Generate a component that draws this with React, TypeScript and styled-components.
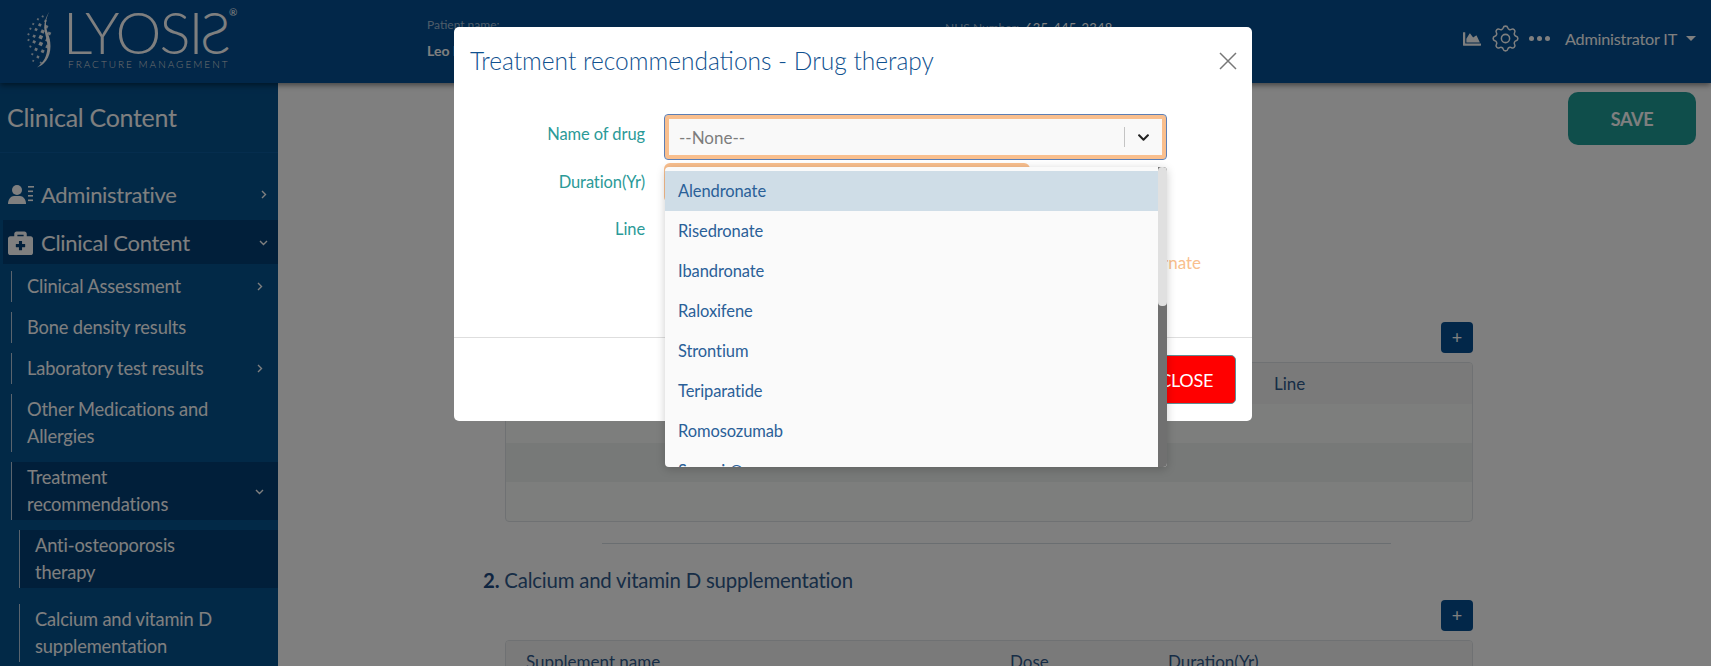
import React from "react";
import styled, { createGlobalStyle } from "styled-components";
import { FaBriefcaseMedical, FaChartArea, FaChevronDown } from "react-icons/fa";
import { HiOutlineCog } from "react-icons/hi";

const Global = createGlobalStyle`
  html, body { margin: 0; padding: 0; height: 100%; overflow: hidden; background: #fff; }
  body { font-family: Lato, "Liberation Sans", sans-serif; }
  * { box-sizing: border-box; }
`;

const Page = styled.div`
  position: relative;
  width: 1711px;
  height: 666px;
  overflow: hidden;
  display: flex;
  flex-direction: column;
`;
const Header = styled.header`
  flex: 0 0 83px;
  height: 83px;
  background: #044f92;
  display: flex;
  align-items: flex-start;
  box-shadow: 0 2px 6px rgba(0, 0, 0, 0.5);
  position: relative;
  z-index: 2;
`;
const LogoBlock = styled.div`
  width: 427px;
  flex: none;
  display: flex;
  align-items: flex-start;
  padding: 9px 0 0 20px;
  color: #fff;
`;
const LogoText = styled.div`
  margin-left: 9px;
  position: relative;
  display: flex;
  flex-direction: column;
`;
const LogoWord = styled.div`
  font-size: 58px;
  font-weight: 300;
  line-height: 58px;
  margin: -6px 0 -6px;
  letter-spacing: -2px;
  white-space: nowrap;
  display: flex;
`;
const Mirrored = styled.span`
  display: inline-block;
  transform: scaleX(-1);
`;
const LogoSub = styled.div`
  font-size: 10px;
  font-weight: 300;
  letter-spacing: 2px;
  line-height: 11px;
  margin: 4px 0 0 5px;
  white-space: nowrap;
  color: #ddd;
`;
const Reg = styled.span`
  position: absolute;
  left: 166px;
  top: -3px;
  font-size: 10px;
  line-height: 12px;
`;
const PatientBlock = styled.div`
  width: 518px;
  flex: none;
  padding-top: 18px;
`;
const PatientLabel = styled.div`
  font-size: 12px;
  line-height: 14px;
  color: #9db9d4;
`;
const PatientValue = styled.div`
  font-size: 14px;
  font-weight: 700;
  line-height: 18px;
  margin-top: 10px;
  color: #fff;
`;
const PhoneBlock = styled.div`
  display: flex;
  gap: 6px;
  padding-top: 20px;
  font-size: 12px;
  line-height: 16px;
`;
const PhoneLabel = styled.span`
  color: #9db9d4;
`;
const PhoneValue = styled.span`
  color: #fff;
  font-size: 13px;
  letter-spacing: 0.2px;
`;
const HeaderRight = styled.div`
  margin-left: auto;
  padding: 26px 15px 0 0;
  display: flex;
  align-items: center;
  color: #fff;
  height: 51px;
`;
const ChartIcon = styled(FaChartArea)`
  font-size: 18px;
  margin-right: 8px;
`;
const GearIcon = styled(HiOutlineCog)`
  font-size: 33px;
  margin-right: 7px;
  stroke-width: 1.1;
`;
const Dots = styled.span`
  display: flex;
  gap: 3px;
  margin-right: 15px;
`;
const Dot = styled.i`
  width: 5px;
  height: 5px;
  border-radius: 50%;
  background: #fff;
`;
const UserName = styled.span`
  font-size: 16.2px;
  letter-spacing: -0.2px;
`;
const Caret = styled.span`
  margin-left: 9px;
  border-top: 5px solid #fff;
  border-left: 5px solid transparent;
  border-right: 5px solid transparent;
`;

const Body = styled.div`
  flex: 1;
  display: flex;
  min-height: 0;
`;
const Sidebar = styled.aside`
  width: 278px;
  flex: none;
  background: #05528f;
  color: #fff;
  overflow: hidden;
`;
const SideTitle = styled.div`
  height: 70px;
  padding: 19px 0 0 7px;
  font-size: 25px;
  line-height: 30px;
  font-weight: 400;
  letter-spacing: -0.3px;
  border-bottom: 1px solid #0a5a9c;
  margin-bottom: 19px;
`;
const TopItem = styled.div<{ $active?: boolean }>`
  height: 44px;
  margin-left: 3px;
  padding: 0 10px 0 5px;
  display: flex;
  align-items: center;
  font-size: 22px;
  letter-spacing: -0.3px;
  background: ${(p) => (p.$active ? "#033f74" : "transparent")};
  & + & {
    margin-top: 4px;
  }
`;
const TopIcon = styled.span`
  width: 33px;
  flex: none;
  display: flex;
  align-items: center;
`;
const Chevron = styled.svg`
  width: 9px;
  height: 11px;
  margin-left: auto;
  flex: none;
`;
const SubList = styled.div`
  display: flex;
  flex-direction: column;
  gap: 10px;
  margin-top: 7px;
`;
const SubItem = styled.div<{ $active?: boolean; $level?: number; $tail?: boolean }>`
  margin-left: ${(p) => (p.$level === 2 ? 19 : 11)}px;
  margin-top: ${(p) => (p.$tail ? 6 : 0)}px;
  border-left: 1px solid #b5c9dc;
  padding: 2px 14px 2px 15px;
  min-height: 31px;
  display: flex;
  align-items: center;
  justify-content: space-between;
  font-size: 18.3px;
  line-height: 27px;
  letter-spacing: -0.15px;
  background: ${(p) => (p.$active ? "#033f74" : "transparent")};
`;
const SubLabel = styled.span<{ $max: number }>`
  max-width: ${(p) => p.$max}px;
`;

const Main = styled.main`
  flex: 1;
  background: #fff;
  padding: 9px 15px 0 227px;
  display: flex;
  flex-direction: column;
  min-width: 0;
  overflow: hidden;
`;
const SaveRow = styled.div`
  display: flex;
  justify-content: flex-end;
  height: 230px;
  flex: none;
`;
const SaveButton = styled.div`
  width: 128px;
  height: 53px;
  background: #1e9c97;
  border-radius: 10px;
  color: #fff;
  font-size: 18px;
  font-weight: 700;
  letter-spacing: -0.3px;
  display: flex;
  align-items: center;
  justify-content: center;
`;
const AddRow = styled.div<{ $gap?: number }>`
  flex: none;
  width: 968px;
  display: flex;
  justify-content: flex-end;
  margin-top: ${(p) => p.$gap ?? 0}px;
  margin-bottom: 9px;
`;
const AddButton = styled.div`
  width: 32px;
  height: 31px;
  border-radius: 4px;
  background: #044f92;
  color: #fff;
  font-size: 18px;
  line-height: 30px;
  text-align: center;
`;
const Card = styled.div<{ $h: number }>`
  width: 968px;
  height: ${(p) => p.$h}px;
  border: 1px solid #dfe3e6;
  border-radius: 4px;
  overflow: hidden;
  flex: none;
  background: #fafcfb;
`;
const TableHead = styled.div`
  height: 41px;
  background: #f5f5f5;
  display: grid;
  align-items: center;
  color: #2f5a8c;
  font-size: 17px;
`;
const Stripe = styled.div<{ $dark?: boolean }>`
  height: 39px;
  background: ${(p) => (p.$dark ? "#eff3f0" : "#fafcfb")};
`;
const LineHead = styled.span`
  padding-left: 768px;
`;
const Divider = styled.div`
  width: 789px;
  height: 1px;
  background: #d5dde2;
  margin: 21px 0 0 97px;
  flex: none;
`;
const SectionTitle = styled.h2`
  flex: none;
  margin: 24px 0 0 -22px;
  font-size: 20.4px;
  font-weight: 400;
  line-height: 24px;
  color: #2f5a8c;
  letter-spacing: -0.2px;
`;
const SectionNum = styled.b`
  font-weight: 700;
  color: #1c4a82;
`;
const Supplement = styled(TableHead)`
  grid-template-columns: 484px 158px 1fr;
  padding-left: 20px;
`;

const Overlay = styled.div`
  position: absolute;
  inset: 0;
  background: rgba(0, 0, 0, 0.5);
  z-index: 5;
`;
const Modal = styled.div`
  position: absolute;
  z-index: 6;
  left: 454px;
  top: 27px;
  width: 798px;
  height: 394px;
  background: #fff;
  border-radius: 5px;
  display: flex;
  flex-direction: column;
`;
const ModalHeader = styled.div`
  height: 61px;
  display: flex;
  align-items: flex-end;
  justify-content: space-between;
  padding: 0 14px 8px 16px;
`;
const ModalTitle = styled.h1`
  margin: 0;
  font-size: 24.5px;
  font-weight: 300;
  line-height: 38px;
  color: #10518f;
  white-space: nowrap;
`;
const CloseX = styled.svg`
  width: 20px;
  height: 20px;
  margin-bottom: 9px;
`;
const Form = styled.div`
  position: relative;
  height: 250px;
  padding-top: 26px;
  border-bottom: 1px solid #dedede;
  display: grid;
  grid-template-columns: 191px 503px;
  column-gap: 19px;
  grid-auto-rows: min-content;
  align-content: start;
`;
const Label = styled.label`
  text-align: right;
  font-size: 16.5px;
  color: #2b9a98;
  letter-spacing: -0.1px;
  line-height: 20px;
`;
const DrugLabel = styled(Label)`
  margin-top: 10px;
`;
const SelectBox = styled.div`
  height: 46px;
  border: 1px solid #5d7fb5;
  border-radius: 4px;
  background: #f9f9f9;
  box-shadow: inset 0 0 0 4px #f9bf8e;
  display: flex;
  align-items: center;
  padding: 0 16px 0 14px;
  font-size: 17px;
  color: #7d7d7d;
`;
const SelectSep = styled.span`
  margin-left: auto;
  width: 1px;
  height: 20px;
  background: #c4c4c4;
`;
const SelectArrow = styled(FaChevronDown)`
  font-size: 13px;
  color: #222;
  margin-left: 12px;
`;
const DurationInput = styled.div`
  width: 366px;
  height: 40px;
  margin-top: 3px;
  border-radius: 6px;
  border: 4px solid #f9bf8e;
`;
const AlternateWrap = styled.div`
  grid-column: 2;
  margin-top: 27px;
  height: 44px;
  display: flex;
  justify-content: flex-end;
  align-items: flex-end;
  width: 537px;
  font-size: 17px;
  color: #f9bf8e;
  line-height: 22px;
`;
const DurationLabel = styled(Label)`
  margin-top: 12px;
`;
const LineLabel = styled(Label)`
  margin-top: 16px;
`;
const ModalFooter = styled.div`
  flex: 1;
  display: flex;
  justify-content: flex-end;
  padding: 17px 16px 0 0;
`;
const CloseButton = styled.div`
  width: 120px;
  height: 49px;
  background: #ff0000;
  border: 1px solid #5f8d94;
  border-radius: 5px;
  color: #fff;
  font-size: 18px;
  letter-spacing: -0.3px;
  display: flex;
  align-items: center;
  justify-content: flex-end;
  padding-right: 22px;
`;
const Dropdown = styled.div`
  position: absolute;
  z-index: 7;
  left: 665px;
  top: 167px;
  width: 502px;
  height: 300px;
  background: #fafafa;
  border-radius: 4px;
  overflow: hidden;
  box-shadow: 0 2px 10px rgba(0, 0, 0, 0.2);
  padding: 4px 9px 0 0;
`;
const Option = styled.div<{ $on?: boolean }>`
  height: 40px;
  line-height: 40px;
  padding-left: 13px;
  font-size: 16.5px;
  letter-spacing: -0.1px;
  color: #2a6098;
  background: ${(p) => (p.$on ? "#cfdde7" : "transparent")};
`;
const Track = styled.div`
  position: absolute;
  right: 0;
  top: 0;
  bottom: 0;
  width: 9px;
  background: #707070;
`;
const Thumb = styled.div`
  width: 9px;
  height: 139px;
  border-radius: 4px;
  background: #e0e0e0;
`;

const Right = ({ open }: { open?: boolean }) => (
  <Chevron viewBox="0 0 9 11" fill="none" stroke="#fff" strokeWidth="1.4">
    {open ? <path d="M1 4l3.5 3.5L8 4" /> : <path d="M3 2l3.5 3.5L3 9" />}
  </Chevron>
);

const UserList = () => (
  <svg width="27" height="21" viewBox="0 0 27 21" fill="#fff">
    <circle cx="9" cy="6" r="5" />
    <path d="M0 20c0-5 3-8 6-8h6c3 0 6 3 6 8z" />
    <rect x="20" y="2" width="6" height="1.6" />
    <rect x="20" y="6.5" width="5" height="1.6" />
    <rect x="20" y="11" width="5" height="1.6" />
    <rect x="20" y="15.5" width="5" height="1.6" />
  </svg>
);

const dots: [number, number, number][] = [
  [24, 6, 1], [19, 9, 1], [27, 11, 1.2], [14, 14, 1], [21, 15, 1.5], [28, 17, 1.6],
  [11, 19, 1], [17, 20, 1.4], [24, 22, 1.8], [31, 24, 1.6], [9, 25, 1], [15, 27, 1.4],
  [22, 28, 1.9], [29, 31, 1.8], [9, 31, 1], [15, 33, 1.5], [22, 35, 1.9], [29, 38, 1.7],
  [11, 38, 1], [17, 41, 1.5], [24, 43, 1.6], [13, 46, 1], [19, 49, 1.3], [14, 53, 0.9],
  [22, 55, 1],
];

const SpineMark = () => (
  <svg width="34" height="62" viewBox="0 0 36 62" fill="#fff">
    {dots.map(([x, y, r], i) => (
      <rect key={i} x={x - r} y={y - r} width={r * 2} height={r * 2} opacity={0.55 + r * 0.2} transform={`rotate(25 ${x} ${y})`} />
    ))}
    <path d="M31 1c-4 8-5 14-1 24 4 11 3 24-5 31-2 2-4 3-7 4 7-5 11-12 11-22 0-6-2-11-3-17-1-7 1-14 5-20z" />
  </svg>
);

const drugs = ["Alendronate", "Risedronate", "Ibandronate", "Raloxifene", "Strontium", "Teriparatide", "Romosozumab", "Sunosi @"];

export default function App() {
  return (
    <Page>
      <Global />
      <Header>
        <LogoBlock>
          <SpineMark />
          <LogoText>
            <LogoWord>
              LYOSI<Mirrored>S</Mirrored>
            </LogoWord>
            <Reg>®</Reg>
            <LogoSub>FRACTURE MANAGEMENT</LogoSub>
          </LogoText>
        </LogoBlock>
        <PatientBlock>
          <PatientLabel>Patient name:</PatientLabel>
          <PatientValue>Leo Kim</PatientValue>
        </PatientBlock>
        <PhoneBlock>
          <PhoneLabel>NHS Number:</PhoneLabel>
          <PhoneValue>635-445-2348</PhoneValue>
        </PhoneBlock>
        <HeaderRight>
          <ChartIcon />
          <GearIcon />
          <Dots>
            <Dot />
            <Dot />
            <Dot />
          </Dots>
          <UserName>Administrator IT</UserName>
          <Caret />
        </HeaderRight>
      </Header>
      <Body>
        <Sidebar>
          <SideTitle>Clinical Content</SideTitle>
          <TopItem>
            <TopIcon>
              <UserList />
            </TopIcon>
            Administrative
            <Right />
          </TopItem>
          <TopItem $active>
            <TopIcon>
              <FaBriefcaseMedical size={25} />
            </TopIcon>
            Clinical Content
            <Right open />
          </TopItem>
          <SubList>
            <SubItem>
              <SubLabel $max={215}>Clinical Assessment</SubLabel>
              <Right />
            </SubItem>
            <SubItem>
              <SubLabel $max={215}>Bone density results</SubLabel>
            </SubItem>
            <SubItem>
              <SubLabel $max={215}>Laboratory test results</SubLabel>
              <Right />
            </SubItem>
            <SubItem>
              <SubLabel $max={215}>Other Medications and Allergies</SubLabel>
            </SubItem>
            <SubItem $active>
              <SubLabel $max={200}>Treatment recommendations</SubLabel>
              <Right open />
            </SubItem>
            <SubItem $active $level={2}>
              <SubLabel $max={180}>Anti-osteoporosis therapy</SubLabel>
            </SubItem>
            <SubItem $level={2} $tail>
              <SubLabel $max={215}>Calcium and vitamin D supplementation</SubLabel>
            </SubItem>
          </SubList>
        </Sidebar>
        <Main>
          <SaveRow>
            <SaveButton>SAVE</SaveButton>
          </SaveRow>
          <AddRow>
            <AddButton>+</AddButton>
          </AddRow>
          <Card $h={160}>
            <TableHead>
              <LineHead>Line</LineHead>
            </TableHead>
            <Stripe />
            <Stripe $dark />
          </Card>
          <Divider />
          <SectionTitle>
            <SectionNum>2.</SectionNum> Calcium and vitamin D supplementation
          </SectionTitle>
          <AddRow $gap={8}>
            <AddButton>+</AddButton>
          </AddRow>
          <Card $h={80}>
            <Supplement>
              <span>Supplement name</span>
              <span>Dose</span>
              <span>Duration(Yr)</span>
            </Supplement>
          </Card>
        </Main>
      </Body>
      <Overlay />
      <Modal>
        <ModalHeader>
          <ModalTitle>Treatment recommendations - Drug therapy</ModalTitle>
          <CloseX viewBox="0 0 20 20" fill="none" stroke="#777" strokeWidth="1.5">
            <path d="M2 2l16 16M18 2L2 18" />
          </CloseX>
        </ModalHeader>
        <Form>
          <DrugLabel>Name of drug</DrugLabel>
          <SelectBox>
            --None--
            <SelectSep />
            <SelectArrow />
          </SelectBox>
          <DurationLabel>Duration(Yr)</DurationLabel>
          <DurationInput />
          <LineLabel>Line</LineLabel>
          <AlternateWrap>Alternate</AlternateWrap>
        </Form>
        <ModalFooter>
          <CloseButton>CLOSE</CloseButton>
        </ModalFooter>
      </Modal>
      <Dropdown>
        {drugs.map((d, i) => (
          <Option key={d} $on={i === 0}>
            {d}
          </Option>
        ))}
        <Track>
          <Thumb />
        </Track>
      </Dropdown>
    </Page>
  );
}
